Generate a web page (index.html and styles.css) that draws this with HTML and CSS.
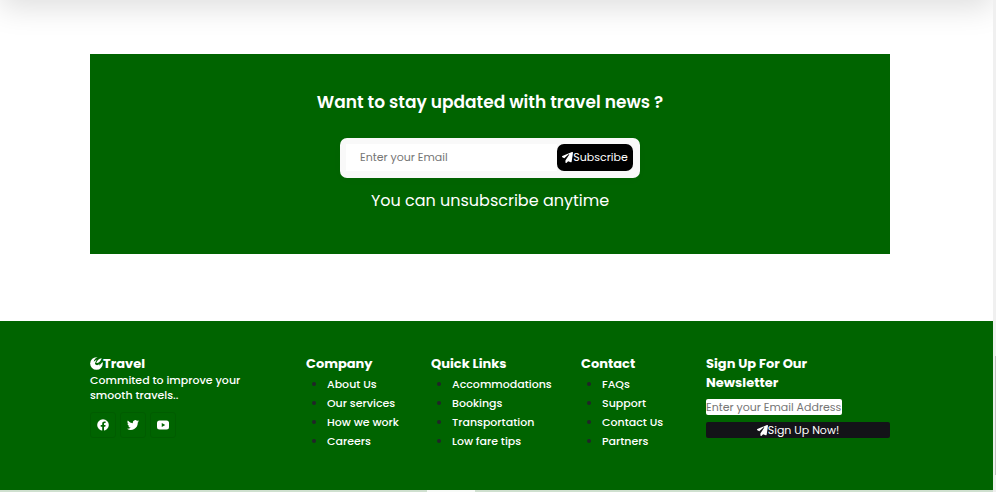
FILE: index.html
```html
<!DOCTYPE html>
<html lang="en">
<head>
<meta charset="utf-8">
<meta name="viewport" content="width=device-width, initial-scale=1">
<title>Travel</title>
<link rel="stylesheet" href="styles.css">
</head>
<body>
<svg class="symbols" aria-hidden="true">
  <symbol id="plane" viewBox="0 0 512 512"><path d="M498 6c11 8 16 20 14 33l-64 416c-2 10-8 18-16 23s-19 6-28 2l-120-50-68 74c-9 10-23 13-36 8s-20-17-20-30v-84c0-4 2-8 4-11L332 129c6-6 6-15 0-21s-15-6-21-1L106 289 17 245C7 239 0 229 0 217s6-23 16-29L464 4c11-6 24-5 34 2z"/></symbol>
</svg>
<div class="viewport">
  <main class="page">
    <div class="card-shadow"></div>
    <section class="subscribe container">
      <h2>Want to stay updated with travel news ?</h2>
      <form class="subscribe-form">
        <input type="email" placeholder="Enter your Email" aria-label="Your email">
        <button type="button"><svg class="icon"><use href="#plane"/></svg>Subscribe</button>
      </form>
      <p>You can unsubscribe anytime</p>
    </section>
    <footer class="footer">
      <div class="footer-grid container">
        <div class="brand">
          <h3><svg class="logo" viewBox="0 0 14 14" aria-hidden="true"><circle cx="7" cy="7" r="6.800" fill="#fff"/><path d="M14 0H8.500C6 1 4.200 3 4 5.200L7.200 2.800 5.300 7c.9 2.400 3.600 2.200 5 .2L9.700 9.500C11.500 8 12 6.200 14 5z" fill="#006400"/><path d="M6.700 6.300C7.600 3.800 9.600 1.900 12.600 1.400 11.600 4.600 9.300 7.200 6.700 6.300z" fill="#fff"/></svg>Travel</h3>
          <p>Commited to improve your smooth travels..</p>
          <div class="social">
            <a href="#" aria-label="Facebook"><svg viewBox="0 0 12 12"><circle cx="6" cy="6" r="5.800" fill="#fff"/><path d="M5.200 12V7.800H3.700V6.100h1.500V4.800c0-1.500.9-2.300 2.200-2.300l1.200.1v1.500h-.7c-.7 0-.9.400-.9.900v1.100h1.600l-.3 1.700H7V12z" fill="#006400"/></svg></a>
            <a href="#" aria-label="Twitter"><svg viewBox="0 0 24 24"><path fill="#fff" d="M24 4.600a10 10 0 0 1-2.800.8 5 5 0 0 0 2.100-2.700 10 10 0 0 1-3.100 1.200 4.900 4.900 0 0 0-8.400 4.500A14 14 0 0 1 1.700 3.100a4.900 4.900 0 0 0 1.500 6.600 5 5 0 0 1-2.200-.6 4.900 4.900 0 0 0 3.900 4.900 5 5 0 0 1-2.200.1 4.900 4.900 0 0 0 4.600 3.400A10 10 0 0 1 0 19.500 14 14 0 0 0 21.500 7.100 10 10 0 0 0 24 4.600z"/></svg></a>
            <a href="#" aria-label="YouTube"><svg viewBox="0 0 24 24"><rect x="0" y="3" width="24" height="18" rx="5" fill="#fff"/><path d="m9.500 8 7 4-7 4z" fill="#006400"/></svg></a>
          </div>
        </div>
        <nav aria-label="Company"><h3>Company</h3><ul><li><a href="#">About Us</a></li><li><a href="#">Our services</a></li><li><a href="#">How we work</a></li><li><a href="#">Careers</a></li></ul></nav>
        <nav aria-label="Quick links"><h3>Quick Links</h3><ul><li><a href="#">Accommodations</a></li><li><a href="#">Bookings</a></li><li><a href="#">Transportation</a></li><li><a href="#">Low fare tips</a></li></ul></nav>
        <nav aria-label="Contact"><h3>Contact</h3><ul><li><a href="#">FAQs</a></li><li><a href="#">Support</a></li><li><a href="#">Contact Us</a></li><li><a href="#">Partners</a></li></ul></nav>
        <form class="newsletter">
          <h3>Sign Up For Our Newsletter</h3>
          <input type="email" placeholder="Enter your Email Address" aria-label="Email address">
          <button type="button"><svg class="icon"><use href="#plane"/></svg>Sign Up Now!</button>
        </form>
      </div>
    </footer>
    <div class="bottom-edge"><span></span></div>
  </main>
  <div class="scroll-track"><span></span></div>
</div>
</body>
</html>
```
FILE: styles.css
```css
* { box-sizing: border-box; margin: 0; padding: 0; }
body { font-family: Poppins, Inter, "Open Sans", sans-serif; background: #fff; color: #fff; overflow: hidden; }
.symbols { position: absolute; width: 0; height: 0; }
.viewport { display: grid; grid-template-columns: minmax(0, 1fr) 3px; height: 100vh; overflow: hidden; }
.page { display: flex; flex-direction: column; overflow: hidden; }
.card-shadow { flex: none; height: 60px; margin-top: -60px; box-shadow: 0 8px 30px rgba(0, 0, 0, .13); }
.container { width: calc(100% - 193px); max-width: 800px; margin-left: 90px; }
.subscribe { margin-top: 54px; margin-bottom: 67px; padding: 36px 0 41px; background: #006400; display: flex; flex-direction: column; align-items: center; }
.subscribe h2 { font-size: 17px; line-height: 24px; font-weight: 600; margin-bottom: 24px; }
.subscribe p { font-size: 16px; line-height: 24px; margin-top: 11px; }
.subscribe-form { width: 300px; height: 40px; padding: 6px; border-radius: 7px; background: #f9f9f9; display: flex; box-shadow: 0 2px 12px rgba(0, 0, 0, .02); }
input, button { font-family: inherit; border: 0; outline: 0; }
input::placeholder { color: #757575; opacity: 1; }
.subscribe-form input { flex: 1; min-width: 0; height: 27px; padding: 0 14px; font-size: 11px; background: #fff; }
.subscribe-form button { width: 76px; height: 27px; margin-right: 1px; border-radius: 7px; background: #000; font-size: 11px; }
button { display: flex; align-items: center; justify-content: center; color: #fff; white-space: nowrap; }
.icon { width: 11px; height: 11px; fill: #fff; flex: none; }
.footer { background: #006400; height: 169px; flex: none; padding-top: 33px; }
.footer-grid { display: grid; grid-template-columns: 216fr 125fr 150fr 125fr 184fr; }
h3 { font-size: 13px; line-height: 19px; font-weight: 700; }
.brand h3 { display: flex; align-items: center; }
.logo { width: 13px; height: 13px; }
.brand p { max-width: 165px; font-size: 11px; line-height: 15px; font-weight: 500; }
.social { display: flex; gap: 4px; margin-top: 9px; }
.social a { width: 26px; height: 26px; border: 1px solid #005c00; border-radius: 3px; display: flex; align-items: center; justify-content: center; }
.social svg { width: 12px; height: 12px; }
ul { padding-left: 21px; margin-top: 2px; }
li { font-size: 11px; line-height: 19px; font-weight: 500; }
li::marker { color: #212529; }
li a { color: #fff; text-decoration: none; }
.newsletter h3 { max-width: 150px; }
.newsletter input { display: block; width: 136px; height: 16px; margin-top: 7px; border-radius: 2px; font-size: 11px; background: #fff; }
.newsletter button { width: 100%; height: 16px; margin-top: 7px; border-radius: 2px; background: #131318; font-size: 11px; }
.bottom-edge { flex: none; height: 2px; padding-left: 43%; background: #cfe0cf; }
.bottom-edge span { display: block; width: 48px; height: 2px; background: #f7faf7; }
.scroll-track { background: #f0f0f0; padding: 356px 0 0 2px; }
.scroll-track span { display: block; height: 119px; background: #c1c1c1; }
```
